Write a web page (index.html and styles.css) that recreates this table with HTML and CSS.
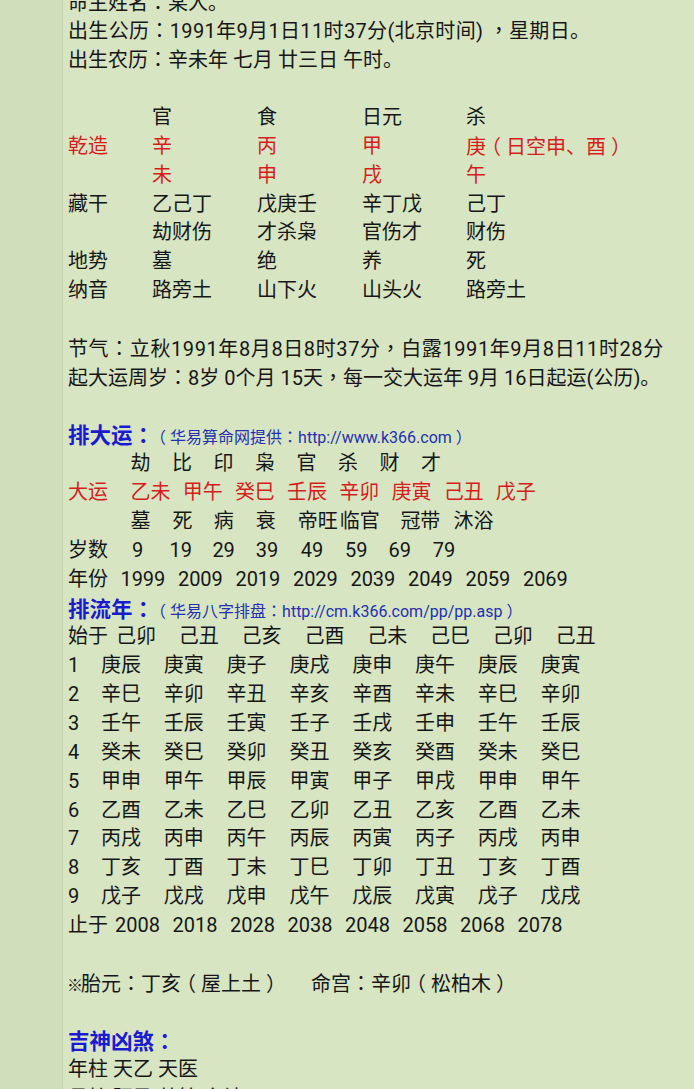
FILE: index.html
```html
<!DOCTYPE html>
<html lang="zh-CN">
<head>
<meta charset="utf-8">
<title>八字排盘</title>
<link rel="stylesheet" href="styles.css">
</head>
<body>
<div class="page">
  <aside class="side"></aside>
  <main class="main">
    <div class="ln">命主姓名<span class="p" lang="zh-TW">：</span>某人。</div>
    <div class="ln sp-birth">出生公历<span class="p" lang="zh-TW">：</span>1991年9月1日11时37分(北京时间) <span class="p" lang="zh-TW">，</span>星期日。</div>
    <div class="ln">出生农历<span class="p" lang="zh-TW">：</span>辛未年 七月 廿三日 午时。</div>
    <div class="ln"></div>

    <div class="pillars">
      <span></span><span>官</span><span>食</span><span>日元</span><span>杀</span>
      <span class="red">乾造</span><span class="red">辛</span><span class="red">丙</span><span class="red">甲</span><span class="red">庚<span class="br">（</span>日空申、酉<span class="br">）</span></span>
      <span></span><span class="red">未</span><span class="red">申</span><span class="red">戌</span><span class="red">午</span>
      <span>藏干</span><span>乙己丁</span><span>戊庚壬</span><span>辛丁戊</span><span>己丁</span>
      <span></span><span>劫财伤</span><span>才杀枭</span><span>官伤才</span><span>财伤</span>
      <span>地势</span><span>墓</span><span>绝</span><span>养</span><span>死</span>
      <span>纳音</span><span>路旁土</span><span>山下火</span><span>山头火</span><span>路旁土</span>
    </div>
    <div class="ln"></div>
    <div class="ln sp-jq">节气<span class="p" lang="zh-TW">：</span>立秋1991年8月8日8时37分<span class="p" lang="zh-TW">，</span>白露1991年9月8日11时28分</div>
    <div class="ln">起大运周岁<span class="p" lang="zh-TW">：</span>8岁 0个月 15天<span class="p" lang="zh-TW">，</span>每一交大运年 9月 16日起运(公历)。</div>
    <div class="ln"></div>

    <div class="ln"><span class="hd">排大运<span class="p" lang="zh-TW">：</span></span><span class="src"><span class="br">（</span>华易算命网提供<span class="p" lang="zh-TW">：</span>http://www.k366.com<span class="br">）</span></span></div>
    <div class="row r-shishen"><span></span><span>劫</span><span>比</span><span>印</span><span>枭</span><span>官</span><span>杀</span><span>财</span><span>才</span></div>
    <div class="row r-dayun red"><span>大运</span><span>乙未</span><span>甲午</span><span>癸巳</span><span>壬辰</span><span>辛卯</span><span>庚寅</span><span>己丑</span><span>戊子</span></div>
    <div class="row r-cs"><span></span><span>墓</span><span>死</span><span>病</span><span>衰</span><span>帝旺</span><span>临官</span><span>冠带</span><span>沐浴</span></div>
    <div class="row r-age"><span>岁数</span><span>9</span><span>19</span><span>29</span><span>39</span><span>49</span><span>59</span><span>69</span><span>79</span></div>
    <div class="row r-year"><span>年份</span><span>1999</span><span>2009</span><span>2019</span><span>2029</span><span>2039</span><span>2049</span><span>2059</span><span>2069</span></div>

    <div class="ln"><span class="hd">排流年<span class="p" lang="zh-TW">：</span></span><span class="src"><span class="br">（</span>华易八字排盘<span class="p" lang="zh-TW">：</span>http://cm.k366.com/pp/pp.asp<span class="br">）</span></span></div>
    <div class="row r-start"><span>始于</span><span>己卯</span><span>己丑</span><span>己亥</span><span>己酉</span><span>己未</span><span>己巳</span><span>己卯</span><span>己丑</span></div>
    <div class="row r-ln"><span>1</span><span>庚辰</span><span>庚寅</span><span>庚子</span><span>庚戌</span><span>庚申</span><span>庚午</span><span>庚辰</span><span>庚寅</span></div>
    <div class="row r-ln"><span>2</span><span>辛巳</span><span>辛卯</span><span>辛丑</span><span>辛亥</span><span>辛酉</span><span>辛未</span><span>辛巳</span><span>辛卯</span></div>
    <div class="row r-ln"><span>3</span><span>壬午</span><span>壬辰</span><span>壬寅</span><span>壬子</span><span>壬戌</span><span>壬申</span><span>壬午</span><span>壬辰</span></div>
    <div class="row r-ln"><span>4</span><span>癸未</span><span>癸巳</span><span>癸卯</span><span>癸丑</span><span>癸亥</span><span>癸酉</span><span>癸未</span><span>癸巳</span></div>
    <div class="row r-ln"><span>5</span><span>甲申</span><span>甲午</span><span>甲辰</span><span>甲寅</span><span>甲子</span><span>甲戌</span><span>甲申</span><span>甲午</span></div>
    <div class="row r-ln"><span>6</span><span>乙酉</span><span>乙未</span><span>乙巳</span><span>乙卯</span><span>乙丑</span><span>乙亥</span><span>乙酉</span><span>乙未</span></div>
    <div class="row r-ln"><span>7</span><span>丙戌</span><span>丙申</span><span>丙午</span><span>丙辰</span><span>丙寅</span><span>丙子</span><span>丙戌</span><span>丙申</span></div>
    <div class="row r-ln"><span>8</span><span>丁亥</span><span>丁酉</span><span>丁未</span><span>丁巳</span><span>丁卯</span><span>丁丑</span><span>丁亥</span><span>丁酉</span></div>
    <div class="row r-ln"><span>9</span><span>戊子</span><span>戊戌</span><span>戊申</span><span>戊午</span><span>戊辰</span><span>戊寅</span><span>戊子</span><span>戊戌</span></div>
    <div class="row r-end"><span>止于</span><span>2008</span><span>2018</span><span>2028</span><span>2038</span><span>2048</span><span>2058</span><span>2068</span><span>2078</span></div>
    <div class="ln"></div>
    <div class="ln"><span class="mark">※</span>胎元<span class="p" lang="zh-TW">：</span>丁亥<span class="br">（</span>屋上土<span class="br">）</span><span class="gap">　</span>命宫<span class="p" lang="zh-TW">：</span>辛卯<span class="br">（</span>松柏木<span class="br">）</span></div>
    <div class="ln"></div>
    <div class="ln"><span class="hd">吉神凶煞<span class="p" lang="zh-TW">：</span></span></div>
    <div class="ln">年柱 天乙 天医</div>
    <div class="ln">月柱 驿马 劫煞 亡神</div>
  </main>
</div>
</body>
</html>
```

FILE: styles.css
```css
html, body {
  margin: 0;
  padding: 0;
  background: #d7e5c3;
}

.page {
  display: flex;
  height: 1089px;
  overflow: hidden;
}

.side {
  width: 62px;
  flex: 0 0 62px;
  background: #d0dfbb;
  border-right: 1px solid #c3d3ac;
}

.main {
  flex: 1;
  padding-left: 5px;
  margin-top: -12.5px;
  font-family: Roboto, "Noto Sans CJK SC", sans-serif;
  font-size: 20px;
  line-height: 28.86px;
  color: #161616;
}

.ln {
  height: 28.86px;
  white-space: nowrap;
}

/* full-width punctuation centred in its cell */
.p {
  font-family: "Noto Sans CJK TC", "Noto Sans CJK SC", sans-serif;
}

/* full-width brackets: half-width glyph, padded back to a full cell */
.br {
  font-family: "Noto Sans CJK SC", sans-serif;
  font-feature-settings: "halt" 1;
  padding: 0 0.25em;
}

.gap {
  display: inline-block;
  width: 30px;
}

.sp-birth {
  letter-spacing: 0.35px;
}

.sp-jq {
  letter-spacing: 0.6px;
}

.mark {
  display: inline-block;
  width: 14px;
  margin-left: -1px;
  font-size: 16px;
  font-family: "Noto Sans CJK SC", sans-serif;
}

.red {
  color: #d41e1e;
}

.hd {
  color: #1a1acf;
  font-weight: bold;
  font-size: 21.5px;
}

.src {
  color: #2430b0;
  font-size: 16px;
}

.pillars {
  display: grid;
  grid-template-columns: 84px 105px 105px 104px auto;
  grid-auto-rows: 28.86px;
  white-space: nowrap;
}

.row {
  display: grid;
  height: 28.86px;
  white-space: nowrap;
}

.r-shishen { grid-template-columns: 62.5px repeat(7, 41.5px) auto; }
.r-dayun   { grid-template-columns: 62.5px repeat(7, 52.2px) auto; }
.r-cs      { grid-template-columns: 62.5px 42.1px 41.1px 42.1px 42px 42px 60.6px 53.1px auto; }
.r-age     { grid-template-columns: 63.9px 37.6px 42.9px 43.4px 45.1px 44.1px 43.5px 44.2px auto; }
.r-year    { grid-template-columns: 52.4px repeat(7, 57.5px) auto; }
.r-start   { grid-template-columns: 48px repeat(7, 62.8px) auto; }
.r-ln      { grid-template-columns: 33px repeat(7, 62.8px) auto; }
.r-end     { grid-template-columns: 47px repeat(7, 57.5px) auto; }
```
